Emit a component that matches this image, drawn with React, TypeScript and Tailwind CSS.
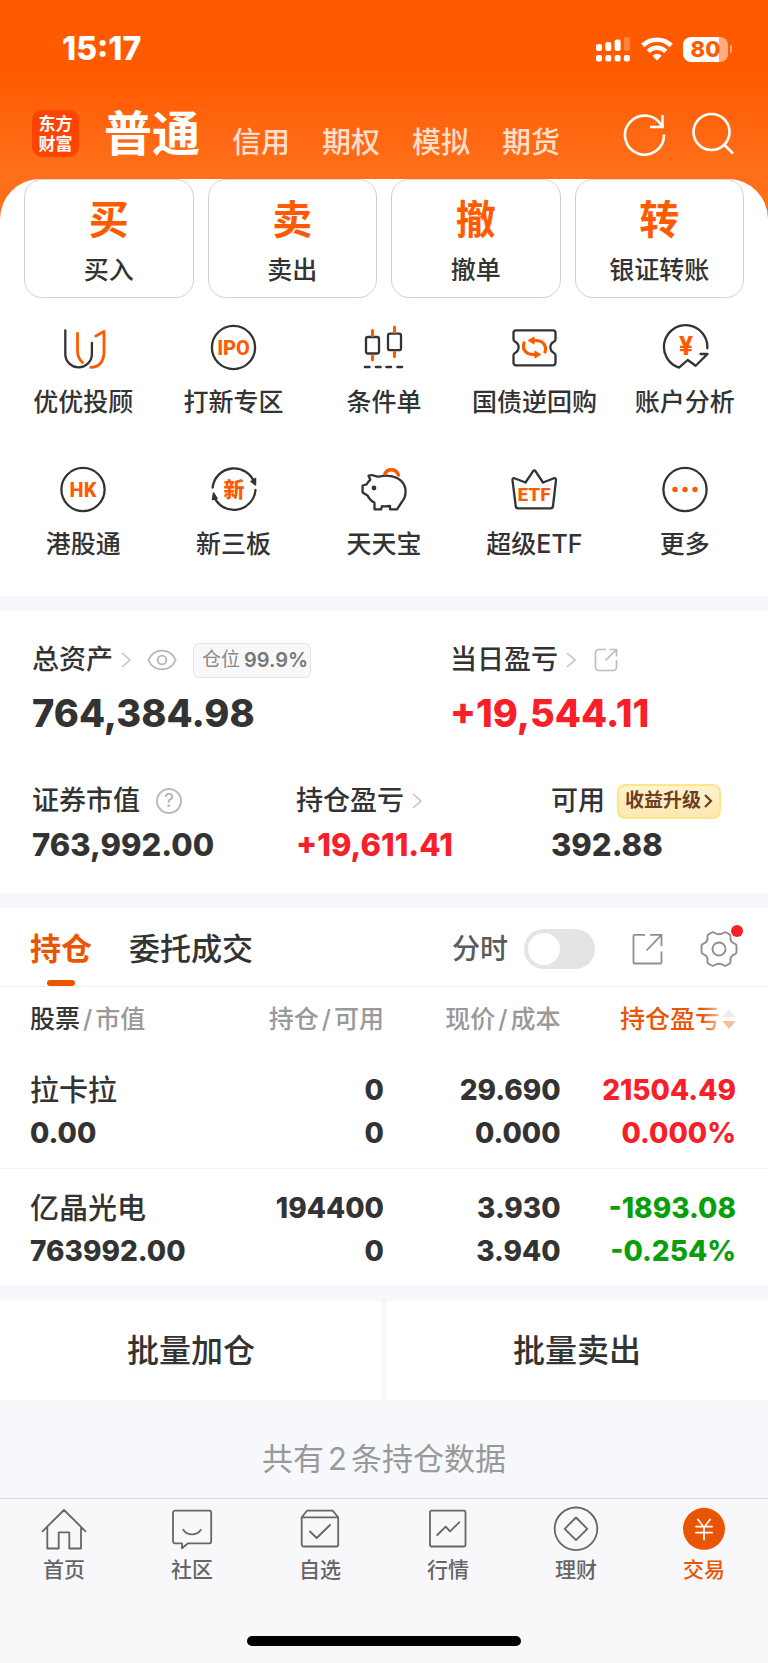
import React, { useState } from "react";

const INK = "#333333";
const ORANGE = "#ff5a00";

function Glyph({ children, label }: { children: React.ReactNode; label?: string }) {
  return (
    <svg
      viewBox="0 0 48 48"
      className="size-12"
      fill="none"
      stroke="currentColor"
      strokeWidth="2.3"
      strokeLinecap="round"
      strokeLinejoin="round"
      role={label ? "img" : undefined}
      aria-label={label}
      aria-hidden={label ? undefined : true}
    >
      {children}
    </svg>
  );
}

function IconText({ x = 24, y, size, children }: { x?: number; y: number; size: number; children: string }) {
  return (
    <text
      x={x}
      y={y}
      fontSize={size}
      fontWeight="800"
      textAnchor="middle"
      fill={ORANGE}
      stroke="none"
      className="font-[Roboto,'Noto_Sans_CJK_SC',sans-serif]"
    >
      {children}
    </text>
  );
}

const actions = [
  { mark: "买", label: "买入" },
  { mark: "卖", label: "卖出" },
  { mark: "撤", label: "撤单" },
  { mark: "转", label: "银证转账" },
];

const shortcuts = [
  {
    label: "优优投顾",
    icon: (
      <Glyph>
        <path d="M6.3 6.5V30a13.3 13.3 0 0 0 26.6 0V19" stroke={INK} />
        <path d="M18.5 9.5V27q0 7 5 11.5" stroke={ORANGE} strokeWidth="2.8" />
        <path d="M36.8 12L45 7.4V28c0 9.5-5 15.3-13.3 15.3" stroke={ORANGE} strokeWidth="2.8" />
      </Glyph>
    ),
  },
  {
    label: "打新专区",
    icon: (
      <Glyph>
        <circle cx="23.500" cy="23.5" r="21.6" />
        <IconText x={23.5} y={30.5} size={20}>IPO</IconText>
      </Glyph>
    ),
  },
  {
    label: "条件单",
    icon: (
      <Glyph>
        <rect x="6" y="13" width="13" height="16.5" rx="2" />
        <rect x="28" y="9.7" width="13" height="16.5" rx="2" />
        <path d="M12.5 6.5V11.5M12.5 31.5V36M34.5 3V8.3M34.5 28V32.5" stroke={ORANGE} strokeWidth="3" />
        <path d="M5 43h4.5M16 43h4.5M26.5 43h4.5M37.5 43h4.5" strokeWidth="2.6" />
      </Glyph>
    ),
  },
  {
    label: "国债逆回购",
    icon: (
      <Glyph>
        <path d="M6 6.3H43a2.5 2.5 0 0 1 2.5 2.5v6.5q0 1.5-1.5 2.3a6.3 6.3 0 0 0 0 11.4q1.5.8 1.5 2.3v7.5a2.5 2.5 0 0 1-2.5 2.5H6A2.5 2.5 0 0 1 3.5 38.8v-7.5q0-1.5 1.5-2.3a6.3 6.3 0 0 0 0-11.4Q3.5 16.8 3.5 15.3V8.8a2.5 2.5 0 0 1 2.5-2.5z" />
        <g stroke={ORANGE} strokeWidth="3.2">
          <path d="M22 16.500h3.500c8 0 11.500 5.500 9.500 11.500" />
          <path d="M27 30.500h-3.500c-8 0-11.500-5.500-9.500-11.500" />
          <path d="M18.5 16.500l5.500-3.300v6.600zM30.500 30.500l-5.500-3.300v6.600z" strokeWidth="1.2" fill={ORANGE} />
        </g>
      </Glyph>
    ),
  },
  {
    label: "账户分析",
    icon: (
      <Glyph>
        <path d="M46.3 24.3A21.7 21.7 0 1 0 18 43.6l8.7-7.6 8 5.7L46.5 30H39.5" />
        <IconText x={25} y={31} size={26}>¥</IconText>
      </Glyph>
    ),
  },
  {
    label: "港股通",
    icon: (
      <Glyph>
        <circle cx="24" cy="23.5" r="21.6" />
        <IconText y={30.5} size={20}>HK</IconText>
      </Glyph>
    ),
  },
  {
    label: "新三板",
    icon: (
      <Glyph>
        <path d="M2.6 21.5A21.6 21.6 0 0 1 44.5 17M45.5 24A21.6 21.6 0 0 1 3.8 30" />
        <path d="M41 15.5l4.5-3v6.5zM7 32.5l-4.5 1 1-6.5z" fill={INK} strokeWidth="1.5" />
        <IconText y={31} size={21}>新</IconText>
      </Glyph>
    ),
  },
  {
    label: "天天宝",
    icon: (
      <Glyph>
        <path d="M8.5 9.7q3.5-1 6 0 2.5 1.3 5.5.8 4-1.2 8.5-.7C39.5 10.5 45.6 17.5 45.6 25.5q0 6-3.8 10.5L37 43.3H30v-3.5q-3.5.8-8 .3l-.8 3.2h-6.7v-6.5Q9.500 34 7.500 29.500L2.600 26.500v-7l4-1.200q1.200-2.500 3.700-4.500z" />
        <circle cx="14" cy="22" r="2.4" fill={INK} stroke="none" />
        <path d="M25 7.5C27.5 2 36.5 2.5 38.3 9" stroke={ORANGE} strokeWidth="3.5" />
      </Glyph>
    ),
  },
  {
    label: "超级ETF",
    icon: (
      <Glyph>
        <path d="M4.5 12.2l11 4.3L23 5.3q1.3-1.7 2.600 0l7.400 11.200 11-4.300q2.200-.3 2 2L43 40q-.3 2.400-2.500 2.400H8.300Q6 42.400 5.700 40L2.500 14.200q-.2-2.300 2-2z" />
        <IconText y={35} size={19}>ETF</IconText>
      </Glyph>
    ),
  },
  {
    label: "更多",
    icon: (
      <Glyph>
        <circle cx="24" cy="23.5" r="21.6" />
        <g fill={ORANGE} stroke="none">
          <circle cx="14" cy="23.5" r="2.7" />
          <circle cx="24" cy="23.5" r="2.7" />
          <circle cx="34" cy="23.5" r="2.7" />
        </g>
      </Glyph>
    ),
  },
];

const holdings = [
  { name: "拉卡拉", value: "0.00", qty: "0", free: "0", price: "29.690", cost: "0.000", pnl: "21504.49", rate: "0.000%", up: true },
  { name: "亿晶光电", value: "763992.00", qty: "194400", free: "0", price: "3.930", cost: "3.940", pnl: "-1893.08", rate: "-0.254%", up: false },
];

const tabs = [
  {
    label: "首页",
    icon: (
      <Glyph>
        <path d="M2.5 26.3L24 5l21.5 21.3M7.3 22V43.5H18.7V27.3H29.3V43.5H41V22" strokeWidth="1.8" />
      </Glyph>
    ),
  },
  {
    label: "社区",
    icon: (
      <Glyph>
        <path d="M7 5.7H41.2a2 2 0 0 1 2 2V36.3a2 2 0 0 1-2 2H20l-6 5v-5H7a2 2 0 0 1-2-2V7.7a2 2 0 0 1 2-2zM15.3 24.7c4 6.3 13.5 6.3 17.5 0" strokeWidth="1.8" />
      </Glyph>
    ),
  },
  {
    label: "自选",
    icon: (
      <Glyph>
        <path d="M5.7 12.3H42.2V39.5a2 2 0 0 1-2 2H7.7a2 2 0 0 1-2-2zL11 5.7H36.8L42.2 12.3M14 26.5l6.7 6.5L34 20" strokeWidth="1.8" />
      </Glyph>
    ),
  },
  {
    label: "行情",
    icon: (
      <Glyph>
        <rect x="6" y="5.7" width="35.5" height="35.8" rx="1.5" strokeWidth="1.8" />
        <path d="M13.3 30l8.4-8.3 4.3 4.6 9.3-9" strokeWidth="1.8" />
      </Glyph>
    ),
  },
  {
    label: "理财",
    icon: (
      <Glyph>
        <circle cx="24" cy="23.8" r="21.3" strokeWidth="1.8" />
        <path d="M24 12.5L35.3 23.8 24 35.1 12.7 23.8z" strokeWidth="1.8" />
      </Glyph>
    ),
  },
  {
    label: "交易",
    active: true,
    icon: (
      <Glyph>
        <circle cx="24" cy="23.8" r="21" fill="#ea5504" stroke="none" />
        <path d="M18 14.5l6 8 6-8M24 22.5V34.5M16 21.7h16M16 27.7h16" stroke="#fff" strokeWidth="1.8" />
      </Glyph>
    ),
  },
];

function Chevron() {
  return (
    <svg viewBox="0 0 10 16" className="h-4 w-2.5" fill="none" stroke="#c4c4c4" strokeWidth="1.6" aria-hidden="true">
      <path d="M1 1l8 7-8 7" />
    </svg>
  );
}

function Slash() {
  return <span className="mx-[3px]">/</span>;
}

function StatusBar() {
  return (
    <div className="flex h-[98px] items-center justify-between pr-9 pl-[62px]">
      <time className="text-[32px] leading-9 font-extrabold">15:17</time>
      <div className="flex items-center gap-2.5">
        <svg viewBox="0 0 35 25" className="h-[25px] w-[35px]" fill="#fff" role="img" aria-label="信号">
          <rect x="0" y="7" width="6" height="7" rx="2" />
          <rect x="9.3" y="5" width="6" height="9" rx="2" />
          <rect x="18.6" y="2.5" width="6" height="11.5" rx="2" />
          <rect x="27.9" y="0" width="6" height="14" rx="2" opacity=".25" />
          <rect x="0" y="18" width="6" height="6.5" rx="2" />
          <rect x="9.3" y="18" width="6" height="6.5" rx="2" />
          <rect x="18.6" y="18" width="6" height="6.5" rx="2" />
          <rect x="27.9" y="18" width="6" height="6.5" rx="2" />
        </svg>
        <svg viewBox="0 0 32 24" className="h-6 w-8" fill="none" stroke="#fff" strokeWidth="4.6" role="img" aria-label="无线网络">
          <path d="M1.8 8.5a20.3 20.3 0 0 1 28.4 0M7.2 14.3a12.6 12.6 0 0 1 17.6 0" />
          <path d="M16 23.5l-4.7-4.8a6.8 6.8 0 0 1 9.4 0z" fill="#fff" stroke="none" />
        </svg>
        <div className="flex items-center gap-0.5">
          <div className="flex h-[25px] w-[45px] items-center justify-center rounded-lg bg-linear-to-r from-white from-80% to-white/50 to-80% text-[22px] leading-6 font-extrabold text-[#ff5a00]">
            80
          </div>
          <div className="h-2 w-0.5 rounded-r bg-white/50" />
        </div>
      </div>
    </div>
  );
}

function Header() {
  return (
    <header className="text-white">
      <StatusBar />
      <div className="flex h-[81px] items-start justify-between pr-[33px] pl-8">
        <div className="flex items-start">
          <div className="mt-3 grid size-[47px] place-content-center rounded-[10px] bg-[#ff4300] text-[17px] leading-5 font-bold">
            <span>东方</span>
            <span>财富</span>
          </div>
          <nav className="ml-[25px] flex items-end gap-8">
            <a href="#normal" className="text-[48px] leading-[72px] font-bold">普通</a>
            {["信用", "期权", "模拟", "期货"].map((t) => (
              <a key={t} href={"#" + t} className="pb-[5px] text-[29px] leading-[44px] font-medium text-[#ffdfcc]">
                {t}
              </a>
            ))}
          </nav>
        </div>
        <div className="mt-3.5 flex gap-6">
          <button aria-label="刷新">
            <svg viewBox="0 0 44 44" className="size-11" fill="none" stroke="#fff" strokeWidth="2.6">
              <path d="M41 22.5A19.500 19.500 0 1 1 39 14.500" />
              <path d="M39.5 3V15H27" />
            </svg>
          </button>
          <button aria-label="搜索">
            <svg viewBox="0 0 44 44" className="size-11" fill="none" stroke="#fff" strokeWidth="2.6">
              <circle cx="20.5" cy="20" r="18" />
              <path d="M33 32.5L42 41.5" />
            </svg>
          </button>
        </div>
      </div>
    </header>
  );
}

function Assets() {
  return (
    <section className="border-t-[15px] border-[#f6f8fb] px-8 pt-[29px] pb-7">
      <div className="grid grid-cols-[418px_1fr]">
        <div>
          <div className="flex h-10 items-center">
            <span className="text-[27px] leading-10 font-medium">总资产</span>
            <span className="ml-2"><Chevron /></span>
            <button aria-label="隐藏金额" className="ml-4">
              <svg viewBox="0 0 30 22" className="h-[22px] w-[30px]" fill="none" stroke="#b5b5b5" strokeWidth="1.8">
                <path d="M1.3 11C7-1.500 23-1.500 28.700 11 23 23.500 7 23.500 1.300 11z" />
                <circle cx="15" cy="11" r="4.3" />
              </svg>
            </button>
            <span className="ml-4 flex h-[35px] items-center gap-1 rounded-md border border-[#e4e4e6] bg-[#f8f8fa] pr-0.5 pl-2 text-[19px] text-[#888]">
              <span>仓位</span>
              <span className="text-[20px] font-semibold text-[#777]">99.9%</span>
            </span>
          </div>
          <div className="mt-2 text-[38px] leading-[50px] font-extrabold">764,384.98</div>
        </div>
        <div>
          <div className="flex h-10 items-center">
            <span className="text-[27px] leading-10 font-medium">当日盈亏</span>
            <span className="ml-2"><Chevron /></span>
            <button aria-label="分享盈亏" className="ml-[18px]">
              <svg viewBox="0 0 24 24" className="size-6" fill="none" stroke="#bdbdbd" strokeWidth="1.7">
                <path d="M12 1.5H5A3.5 3.5 0 0 0 1.5 5v14A3.5 3.5 0 0 0 5 22.500h14a3.5 3.5 0 0 0 3.500-3.500v-7M15.500 1.500h7v7M22.500 1.500L11.500 12.500" />
              </svg>
            </button>
          </div>
          <div className="mt-2 text-[38px] leading-[50px] font-extrabold text-[#f72028]">+19,544.11</div>
        </div>
      </div>
      <div className="mt-[43px] grid grid-cols-[264px_255px_1fr]">
        <div>
          <div className="flex h-10 items-center">
            <span className="text-[27px] leading-10 font-medium">证券市值</span>
            <button aria-label="说明" className="ml-4 flex size-[26px] items-center justify-center rounded-full border-2 border-[#bbb] text-[19px] leading-5 text-[#b0b0b0]">
              ?
            </button>
          </div>
          <div className="mt-1 text-[31px] leading-10 font-extrabold">763,992.00</div>
        </div>
        <div>
          <div className="flex h-10 items-center">
            <span className="text-[27px] leading-10 font-medium">持仓盈亏</span>
            <span className="ml-2"><Chevron /></span>
          </div>
          <div className="mt-1 text-[31px] leading-10 font-extrabold text-[#f72028]">+19,611.41</div>
        </div>
        <div>
          <div className="flex h-10 items-center">
            <span className="text-[27px] leading-10 font-medium">可用</span>
            <a href="#upgrade" className="ml-3 flex h-[35px] items-center gap-0.5 rounded-lg border-2 border-[#ffe58a] bg-linear-to-b from-[#fff3cf] to-[#ffe7b0] px-1.5 text-[19px] font-bold whitespace-nowrap text-[#6b4026]">
              收益升级
              <svg viewBox="0 0 9 14" className="h-3.5 w-2.5" fill="none" stroke="currentColor" strokeWidth="2.2" aria-hidden="true">
                <path d="M1.5 1l6 6-6 6" />
              </svg>
            </a>
          </div>
          <div className="mt-1 text-[31px] leading-10 font-extrabold">392.88</div>
        </div>
      </div>
    </section>
  );
}

function Positions() {
  const [live, setLive] = useState(false);
  return (
    <section className="border-t-[15px] border-[#f6f8fb]">
      <div className="flex h-[79px] items-center justify-between border-b border-[#eeeeee] pt-1 pr-[29px] pl-[30px]">
        <div className="flex h-full gap-[37px]">
          <button className="relative h-full text-[31px] font-bold text-[#ea5504]">
            持仓
            <span className="absolute bottom-0 left-1/2 h-1.5 w-7 -translate-x-1/2 rounded-sm bg-[#ea5504]" />
          </button>
          <button className="h-full text-[31px] font-medium">委托成交</button>
        </div>
        <div className="flex items-center">
          <label htmlFor="live" className="text-[28px] font-medium text-[#5a5a5a]">分时</label>
          <span className="relative ml-4 inline-flex">
            <input
              id="live"
              type="checkbox"
              checked={live}
              onChange={(e) => setLive(e.target.checked)}
              className="peer h-10 w-[71px] appearance-none rounded-full bg-[#e4e4e6] checked:bg-[#ea5504]"
            />
            <span className="pointer-events-none absolute top-1 left-1 size-8 rounded-full bg-white peer-checked:left-[35px]" />
          </span>
          <button aria-label="分享持仓" className="ml-9">
            <svg viewBox="0 0 32 32" className="size-8" fill="none" stroke="#8f8f8f" strokeWidth="1.8">
              <path d="M14 1.8H3.500a1 1 0 0 0-1 1V29.500a1 1 0 0 0 1 1H29.500a1 1 0 0 0 1-1V18.500M19 1.800H30.500V13M30 2.300L15.500 17.500" />
            </svg>
          </button>
          <button aria-label="设置" className="relative ml-9">
            <svg viewBox="0 0 40 40" className="size-10" fill="none" stroke="#8f8f8f" strokeWidth="1.9" strokeLinejoin="round">
              <path d="M12.3 3.700q1.500-1 3 0 4.700 3 9.400 0 1.500-1 3 0l2.800 1.700q1.300.8 1 2.500-.8 5.300 4.500 7 1.500.5 1.500 2v6.200q0 1.500-1.500 2-5.300 1.700-4.500 7 .3 1.700-1 2.500l-2.800 1.700q-1.500 1-3 0-4.700-3-9.400 0-1.500 1-3 0L9.500 34.600q-1.300-.8-1-2.500.8-5.300-4.500-7-1.500-.5-1.500-2v-6.200q0-1.500 1.500-2 5.300-1.700 4.500-7-.3-1.700 1-2.500z" />
              <circle cx="20" cy="20" r="6.5" />
            </svg>
            <span className="absolute -top-1 -right-1 size-3 rounded-full bg-[#f72028]" />
          </button>
        </div>
      </div>

      <table className="w-full table-fixed text-right text-[28px] leading-[43px] font-extrabold">
        <colgroup>
          <col className="w-[27%]" />
          <col className="w-[23%]" />
          <col className="w-[23%]" />
          <col className="w-[27%]" />
        </colgroup>
        <thead>
          <tr className="h-16 text-[25px] leading-8 text-[#999]">
            <th className="pl-[30px] text-left font-medium">
              <span className="text-[#333]">股票</span><Slash />市值
            </th>
            <th className="font-medium">持仓<Slash />可用</th>
            <th className="font-medium">现价<Slash />成本</th>
            <th aria-sort="none" className="pr-8 font-medium">
              <button className="relative inline-flex items-center gap-0.5 text-[#ea5504]">
                持仓盈亏
                <svg viewBox="0 0 14 20" className="h-5 w-3.5" aria-hidden="true">
                  <path d="M7 0l7 8H0z" fill="#ececec" />
                  <path d="M7 20l7-8H0z" fill="#f7c0a0" />
                </svg>
                <span className="absolute inset-y-0 right-3.5 w-5 bg-linear-to-r from-white/0 to-white/70" />
              </button>
            </th>
          </tr>
        </thead>
        <tbody>
          {holdings.map((h) => (
            <tr key={h.name} className="h-[117px] border-b border-[#f0f0f0] last:border-0">
              <td className="pt-1.5 pl-[30px] text-left">
                <div className="text-[29px] font-medium">{h.name}</div>
                <div>{h.value}</div>
              </td>
              <td className="pt-1.5"><div>{h.qty}</div><div>{h.free}</div></td>
              <td className="pt-1.5"><div>{h.price}</div><div>{h.cost}</div></td>
              <td className={h.up ? "pt-1.5 pr-8 text-[#f72028]" : "pt-1.5 pr-8 text-[#0a9f0a]"}>
                <div>{h.pnl}</div>
                <div>{h.rate}</div>
              </td>
            </tr>
          ))}
        </tbody>
      </table>
    </section>
  );
}

export default function App() {
  return (
    <div className="min-h-screen bg-[#f8f8fb] font-[Inter,'Noto_Sans_CJK_SC',sans-serif] text-[#333]">
      <div className="bg-linear-to-b from-[#ff5a00] from-[75px] to-[#ff6e18] to-[165px]">
        <Header />
        <main className="rounded-t-[40px] bg-white">
          <div className="grid grid-cols-4 gap-3.5 px-6">
            {actions.map((a) => (
              <button key={a.label} className="flex h-[119px] flex-col items-center rounded-[18px] border border-[#d2d2d2] pt-4">
                <span className="text-[40px] leading-[48px] font-bold text-[#ff5a00]">{a.mark}</span>
                <span className="mt-2.5 text-[25px] leading-8 font-medium">{a.label}</span>
              </button>
            ))}
          </div>
          <div className="grid grid-cols-5 gap-y-8 px-2 pt-[26px] pb-5">
            {shortcuts.map((s) => (
              <a key={s.label} href={"#" + s.label} className="flex flex-col items-center">
                {s.icon}
                <span className="mt-3 h-[50px] text-[25px] leading-[36px] font-medium whitespace-nowrap">{s.label}</span>
              </a>
            ))}
          </div>
          <Assets />
          <Positions />
        </main>
      </div>

      <div className="grid grid-cols-2 gap-1 bg-[#f6f8fb] pt-4">
        {["批量加仓", "批量卖出"].map((t) => (
          <button key={t} className="h-[99px] bg-white text-[32px] font-medium">{t}</button>
        ))}
      </div>
      <p className="flex h-[98px] items-center justify-center gap-1 bg-[#f6f8fb] pt-5 text-[31px] text-[#999]">
        <span>共有</span>
        <span>2</span>
        <span>条持仓数据</span>
      </p>
      <footer className="border-t border-[#dcdcde] pt-1.5">
        <nav className="grid grid-cols-6">
          {tabs.map((t) => (
            <a
              key={t.label}
              href={"#" + t.label}
              className={t.active ? "flex flex-col items-center text-[#ea5504]" : "flex flex-col items-center text-[#666]"}
            >
              {t.icon}
              <span className="mt-px text-[21px] leading-8 font-medium">{t.label}</span>
            </a>
          ))}
        </nav>
        <div className="flex justify-center pt-[50px] pb-4">
          <div className="h-2.5 w-[274px] rounded-full bg-black" />
        </div>
      </footer>
    </div>
  );
}
